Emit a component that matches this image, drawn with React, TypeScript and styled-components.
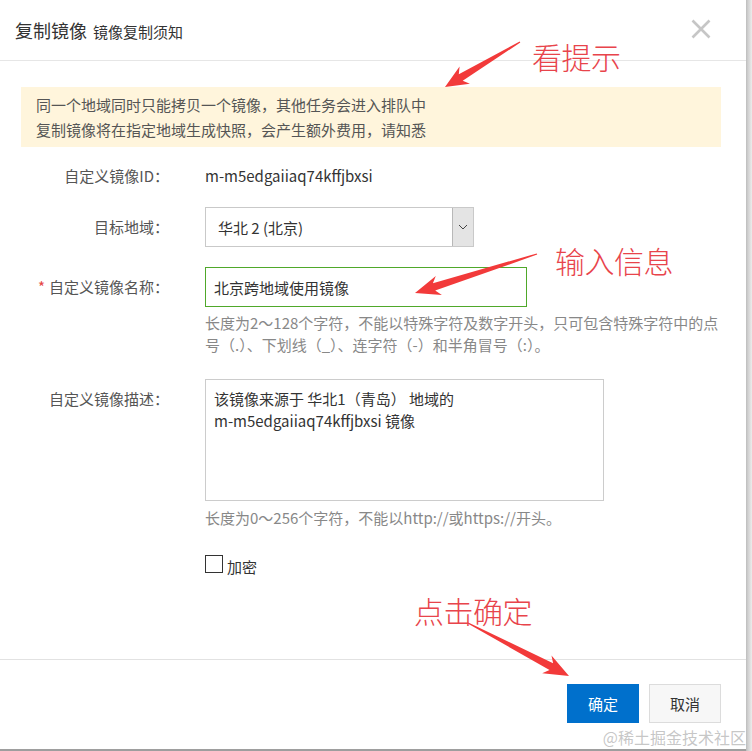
import React from "react";
import styled, { createGlobalStyle } from "styled-components";

const GlobalStyle = createGlobalStyle`
  html, body { margin: 0; padding: 0; background: #e4e4e4; }
  body { font-family: "Noto Sans CJK SC", "Noto Sans", sans-serif; color: #333; }
  * { box-sizing: border-box; }
`;

const Page = styled.div`
  position: relative;
  width: 752px;
  height: 751px;
  overflow: hidden;
  background: linear-gradient(to right, #fff 0, #fff 746px, #bdbdbd 746px, #d0d0d0 748px, #ececec 752px);
`;

const Dialog = styled.div`
  position: relative;
  width: 746px;
  height: 749px;
  background: #fff;
  display: flex;
  flex-direction: column;
  box-shadow: 0 2px 0 #9e9e9e;
`;

const Header = styled.div`
  height: 61px;
  padding: 0 35px 0 15px;
  display: flex;
  align-items: center;
  border-bottom: 1px solid #e6e6e6;
  flex-shrink: 0;
`;

const Title = styled.span`
  font-size: 18px;
  color: #333;
  margin-right: 6px;
`;

const Subtitle = styled.span`
  font-size: 15px;
  color: #333;
  font-weight: 400;
  flex: 1;
  padding-top: 2px;
`;

const Close = styled.button`
  width: 20px;
  height: 20px;
  padding: 0;
  border: 0;
  background: none;
  display: flex;
  align-items: center;
  justify-content: center;
  margin-top: -2px;
`;

const Body = styled.div`
  flex: 1;
  padding: 26px 0 0 0;
`;

const Alert = styled.div`
  margin-left: 21px;
  width: 700px;
  padding: 5px 15px;
  background: #fff5dc;
  font-size: 15px;
  line-height: 25px;
  color: #555;
`;

const Form = styled.div`
  display: flex;
  flex-direction: column;
`;

const Item = styled.div<{ $mt: number; $top?: boolean }>`
  display: grid;
  grid-template-columns: 169px 1fr;
  column-gap: 36px;
  align-items: ${(p) => (p.$top ? "start" : "center")};
  margin-top: ${(p) => p.$mt}px;
`;

const Label = styled.div<{ $pt?: number }>`
  text-align: right;
  font-size: 15px;
  line-height: 22px;
  color: #555;
  white-space: nowrap;
  padding-top: ${(p) => p.$pt ?? 0}px;
`;

const Star = styled.span`
  color: #e54545;
  margin-right: 4px;
`;

const Value = styled.div`
  font-size: 15px;
  line-height: 20px;
  color: #333;
`;

const Select = styled.div`
  width: 269px;
  height: 40px;
  border: 1px solid #c9c9c9;
  display: flex;
  font-size: 15px;
  color: #333;
`;

const SelectText = styled.div`
  flex: 1;
  padding-left: 12px;
  display: flex;
  align-items: center;
`;

const SelectArrow = styled.div`
  width: 21px;
  background: #e4e4e4;
  border-left: 1px solid #b8b8b8;
  display: flex;
  align-items: center;
  justify-content: center;
`;

const Input = styled.div`
  width: 322px;
  height: 40px;
  border: 1px solid #4fa82a;
  padding-left: 8px;
  display: flex;
  align-items: center;
  font-size: 15px;
  color: #333;
`;

const Help = styled.div<{ $mt: number }>`
  margin: ${(p) => p.$mt}px 0 0 205px;
  font-size: 15px;
  line-height: 22px;
  color: #888;
  white-space: nowrap;
`;

const TextArea = styled.div`
  width: 399px;
  height: 122px;
  border: 1px solid #cccccc;
  padding: 8px 8px;
  font-size: 15px;
  line-height: 22px;
  color: #333;
`;

const CheckRow = styled.label`
  margin: 26px 0 0 205px;
  display: flex;
  align-items: flex-start;
  font-size: 15px;
  color: #333;
`;

const Box = styled.span`
  width: 18px;
  height: 18px;
  border: 1.5px solid #333;
  background: #fff;
  margin-right: 4px;
`;

const CheckText = styled.span`
  line-height: 22px;
  margin-top: 1px;
`;

const Footer = styled.div`
  height: 90px;
  border-top: 1px solid #e2e2e2;
  padding: 24px 25px 0 0;
  display: flex;
  justify-content: flex-end;
  gap: 10px;
  flex-shrink: 0;
`;

const Button = styled.button<{ $primary?: boolean }>`
  width: 72px;
  height: 39px;
  font-family: inherit;
  font-size: 15px;
  border: 1px solid ${(p) => (p.$primary ? "#0070cc" : "#dcdcdc")};
  background: ${(p) => (p.$primary ? "#0070cc" : "#f7f7f7")};
  color: ${(p) => (p.$primary ? "#fff" : "#333")};
  padding: 0;
`;

const Overlay = styled.svg`
  position: absolute;
  left: 0;
  top: 0;
  pointer-events: none;
`;

const Note = styled.div<{ $x: number; $y: number }>`
  position: absolute;
  left: ${(p) => p.$x}px;
  top: ${(p) => p.$y}px;
  font-size: 30px;
  line-height: 34px;
  color: #e8444b;
  font-weight: 300;
  letter-spacing: -0.5px;
  pointer-events: none;
`;

const Watermark = styled.div`
  position: absolute;
  right: 6px;
  bottom: 5px;
  font-size: 16px;
  line-height: 18px;
  color: rgba(150, 150, 150, 0.55);
  pointer-events: none;
`;

function arrowPoints(tx: number, ty: number, px: number, py: number, head: number, half: number) {
  const dx = px - tx;
  const dy = py - ty;
  const len = Math.hypot(dx, dy);
  const ux = dx / len;
  const uy = dy / len;
  const nx = -uy;
  const ny = ux;
  const bx = px - ux * head;
  const by = py - uy * head;
  const ix = px - ux * (head * 0.8);
  const iy = py - uy * (head * 0.8);
  const sw = half * 0.38;
  const pts = [
    [tx + nx * 0.6, ty + ny * 0.6],
    [ix + nx * sw, iy + ny * sw],
    [bx + nx * half, by + ny * half],
    [px, py],
    [bx - nx * half, by - ny * half],
    [ix - nx * sw, iy - ny * sw],
    [tx - nx * 0.6, ty - ny * 0.6],
  ];
  return pts.map((p) => `${p[0].toFixed(1)},${p[1].toFixed(1)}`).join(" ");
}

const Arrow: React.FC<{ t: [number, number]; p: [number, number]; head?: number; half?: number }> = ({
  t,
  p,
  head = 24,
  half = 10,
}) => <polygon points={arrowPoints(t[0], t[1], p[0], p[1], head, half)} fill="#f23a3a" />;

export default function App() {
  return (
    <>
      <GlobalStyle />
      <Page>
        <Dialog>
          <Header>
            <Title>复制镜像</Title>
            <Subtitle>镜像复制须知</Subtitle>
            <Close aria-label="close">
              <svg width="20" height="20" viewBox="0 0 20 20">
                <path d="M1.5 1.5 L18.5 18.5 M18.5 1.5 L1.5 18.5" stroke="#c6c6c6" strokeWidth="2.6" />
              </svg>
            </Close>
          </Header>
          <Body>
            <Alert>
              同一个地域同时只能拷贝一个镜像，其他任务会进入排队中
              <br />
              复制镜像将在指定地域生成快照，会产生额外费用，请知悉
            </Alert>
            <Form>
              <Item $mt={18}>
                <Label>自定义镜像ID：</Label>
                <Value>m-m5edgaiiaq74kffjbxsi</Value>
              </Item>
              <Item $mt={20}>
                <Label>目标地域：</Label>
                <Select>
                  <SelectText>华北 2 (北京)</SelectText>
                  <SelectArrow>
                    <svg width="10" height="6" viewBox="0 0 10 6">
                      <path d="M1 1 L5 5 L9 1" fill="none" stroke="#444" strokeWidth="1" />
                    </svg>
                  </SelectArrow>
                </Select>
              </Item>
              <Item $mt={20}>
                <Label>
                  <Star>*</Star>自定义镜像名称：
                </Label>
                <Input>北京跨地域使用镜像</Input>
              </Item>
              <Help $mt={5}>
                长度为2～128个字符，不能以特殊字符及数字开头，只可包含特殊字符中的点
                <br />
                号（.）、下划线（_）、连字符（-）和半角冒号（:）。
              </Help>
              <Item $mt={23} $top>
                <Label $pt={9}>自定义镜像描述：</Label>
                <TextArea>
                  该镜像来源于 华北1（青岛） 地域的
                  <br />
                  m-m5edgaiiaq74kffjbxsi 镜像
                </TextArea>
              </Item>
              <Help $mt={6}>长度为0～256个字符，不能以http://或https://开头。</Help>
              <CheckRow>
                <Box />
                <CheckText>加密</CheckText>
              </CheckRow>
            </Form>
          </Body>
          <Footer>
            <Button $primary>确定</Button>
            <Button>取消</Button>
          </Footer>
        </Dialog>
        <Overlay width="752" height="751" viewBox="0 0 752 751">
          <Arrow t={[520, 42]} p={[445, 87]} head={23} half={10} />
          <Arrow t={[537, 254]} p={[415, 293]} head={25} half={10} />
          <Arrow t={[468, 623]} p={[569, 676]} head={25} half={10} />
        </Overlay>
        <Note $x={532} $y={39}>看提示</Note>
        <Note $x={555} $y={243}>输入信息</Note>
        <Note $x={414} $y={593}>点击确定</Note>
        <Watermark>@稀土掘金技术社区</Watermark>
      </Page>
    </>
  );
}
